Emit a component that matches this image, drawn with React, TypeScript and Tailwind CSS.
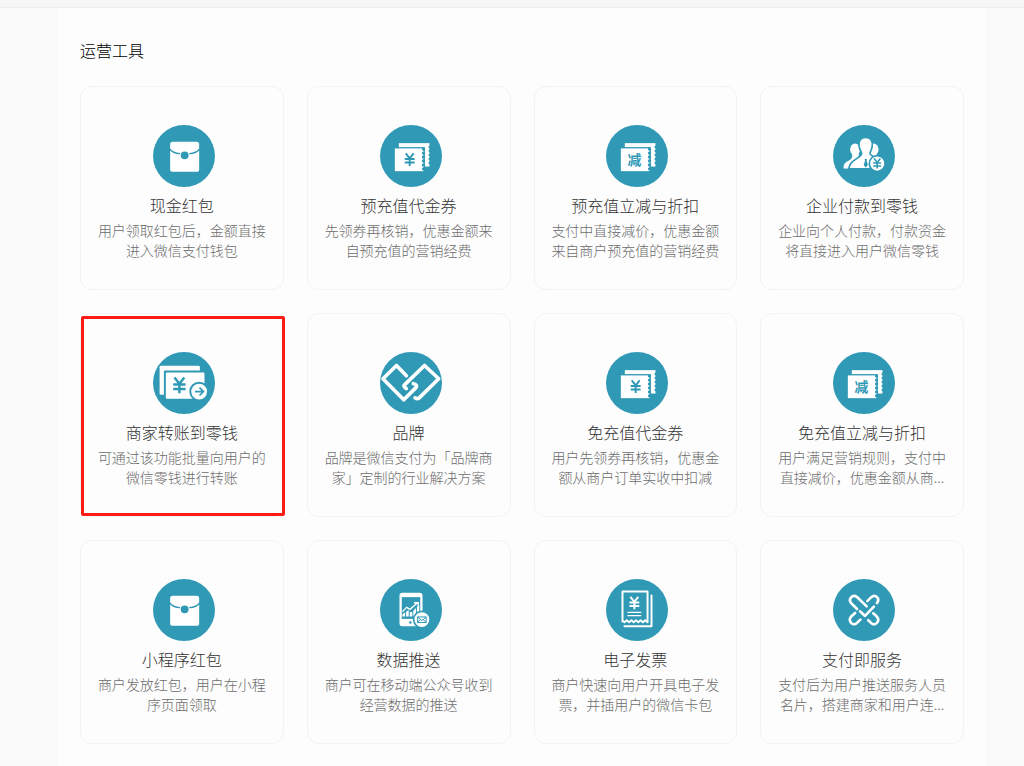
import type { ReactNode } from "react";

const TEAL = "#3099b5";

/** Yuan sign centred on x / y, drawn in the current stroke colour. */
function Yuan({ x, y, scale = 1 }: { x: number; y: number; scale?: number }) {
  return (
    <g
      transform={`translate(${x} ${y}) scale(${scale})`}
      fill="none"
      strokeWidth="6"
    >
      <path d="M-12 -19 L0 -4 L12 -19 M0 -4 V19 M-15 -2 H15 M-15 9 H15" />
    </g>
  );
}

function Envelope() {
  return (
    <>
      <rect x="52" y="51" width="88" height="91" rx="8" fill="#fff" />
      <g fill="none" stroke={TEAL} strokeWidth="4">
        <path d="M50 72 Q60 86 82 87" />
        <path d="M142 72 Q132 86 110 87" />
      </g>
      <circle cx="96" cy="92" r="12" fill={TEAL} />
    </>
  );
}

/** Two stacked coupons with a perforated right edge. */
function Coupon({ children }: { children: ReactNode }) {
  return (
    <>
      <path d="M57 55 H150 V126 H57 Z" fill="#fff" />
      <path d="M41 67 H136 V144 H41 Z" fill={TEAL} />
      <path d="M45 71 H132 V140 H45 Z" fill="#fff" />
      <g fill={TEAL}>
        {[73, 85, 97, 109, 121, 133].map((y) => (
          <circle key={y} cx="132" cy={y} r="5" />
        ))}
        {[67, 79, 91, 103, 115].map((y) => (
          <circle key={y} cx="151" cy={y} r="4" />
        ))}
      </g>
      {children}
    </>
  );
}

function YuanCoupon() {
  return (
    <Coupon>
      <g stroke={TEAL}>
        <Yuan x={90} y={105} />
      </g>
    </Coupon>
  );
}

function DiscountCoupon() {
  return (
    <Coupon>
      <text
        x="86"
        y="120"
        textAnchor="middle"
        fill={TEAL}
        className="font-['Noto_Sans_CJK_SC',sans-serif] text-[42px] font-bold"
      >
        减
      </text>
    </Coupon>
  );
}

function People() {
  return (
    <>
      <g fill="#fff">
        <ellipse cx="67" cy="74" rx="15" ry="18" />
        <path d="M58 84 H78 V132 H32 Q30 116 46 109 Q60 103 58 92 Z" />
        <ellipse cx="123" cy="74" rx="15" ry="18" />
        <path d="M110 84 H132 Q132 98 144 104 V132 H110 Z" />
      </g>
      <path
        d="M99 38 C115 38 121 50 119 64 C118 74 113 80 112 86 C112 98 150 98 152 133 H48 C49 104 86 102 87 86 C86 80 80 74 79 64 C77 50 83 38 99 38 Z"
        fill="#fff"
        stroke={TEAL}
        strokeWidth="5"
      />
      <path d="M96 103 H103 L102 109 L106 121 L99 129 L93 121 L97 109 Z" fill={TEAL} />
      <circle cx="134" cy="117" r="24" fill="#fff" stroke={TEAL} strokeWidth="5" />
      <g stroke={TEAL}>
        <Yuan x={134} y={117} scale={0.8} />
      </g>
    </>
  );
}

function Transfer() {
  return (
    <>
      <rect x="20" y="42" width="122" height="88" rx="4" fill="#fff" />
      <rect x="33" y="56" width="130" height="94" rx="4" fill={TEAL} />
      <rect x="39" y="62" width="117" height="80" rx="3" fill="#fff" />
      <g stroke={TEAL}>
        <Yuan x={80} y={101} scale={1.25} />
      </g>
      <circle cx="140" cy="120" r="27" fill="#fff" stroke={TEAL} strokeWidth="6" />
      <path
        d="M127 120 H152 M141 108 L153 120 L141 132"
        fill="none"
        stroke={TEAL}
        strokeWidth="5"
      />
    </>
  );
}

function Brand() {
  return (
    <g
      fill="none"
      stroke="#fff"
      strokeWidth="11"
      strokeLinecap="round"
      strokeLinejoin="round"
    >
      <path d="M80 72 L50 41 L9 81 L72 145 L109 108 Q113 103 108 99 L101 96" />
      <path d="M106 139 Q113 144 119 139 L178 81 L135 41 L75 99 Q71 103 75 107 L80 111" />
    </g>
  );
}

function DataPush() {
  return (
    <>
      <rect x="59" y="42" width="70" height="101" rx="9" fill="#fff" />
      <rect x="66" y="55" width="56" height="66" fill={TEAL} />
      <circle cx="92" cy="132" r="4" fill={TEAL} />
      <g fill="#fff">
        <path d="M68 107 L76 101 V114 H68 Z M79 99 L87 94 V114 H79 Z M90 101 L98 99 V114 H90 Z M101 96 L109 88 V114 H101 Z M112 85 L119 79 V114 H112 Z" />
      </g>
      <path
        d="M68 99 L81 86 L91 92 L113 73 M103 72 H116 V84"
        fill="none"
        stroke="#fff"
        strokeWidth="4"
      />
      <circle cx="127" cy="123" r="25" fill="#fff" stroke={TEAL} strokeWidth="5" />
      <path
        d="M114 115 H140 V132 H114 Z M114 115 L127 126 L140 115 M114 132 L123 123 M140 132 L131 123"
        fill="none"
        stroke={TEAL}
        strokeWidth="3"
      />
    </>
  );
}

function Invoice() {
  return (
    <g fill="none" stroke="#fff" strokeWidth="6" strokeLinejoin="round">
      <path d="M50 131 V38 H126 V131 L119 125 L112 131 L105 125 L98 131 L91 125 L84 131 L77 125 L70 131 L63 125 L56 131 L50 127" />
      <path d="M138 50 V143 H56" strokeLinecap="round" />
      <path d="M65 101 H107 M65 111 H107" strokeWidth="4" />
      <Yuan x={86} y={73} />
    </g>
  );
}

function Service() {
  return (
    <g
      fill="none"
      stroke="#fff"
      strokeWidth="8"
      strokeLinecap="round"
      strokeLinejoin="round"
    >
      <path d="M73 91 L55 73 C45 61 59 45 72 54 L102 83" />
      <path d="M104 67 L116 55 C129 44 144 60 133 73" />
      <path d="M82 98 L97 112 L124 84" />
      <path d="M67 103 L56 113 C43 126 59 144 72 134 L83 123" />
      <path d="M122 104 L133 114 C144 127 129 144 116 134 L107 125" />
    </g>
  );
}

type Tool = {
  name: string;
  desc: string;
  icon: () => ReactNode;
  marked?: boolean;
};

const tools: Tool[] = [
  { name: "现金红包", desc: "用户领取红包后，金额直接进入微信支付钱包", icon: Envelope },
  { name: "预充值代金券", desc: "先领券再核销，优惠金额来自预充值的营销经费", icon: YuanCoupon },
  { name: "预充值立减与折扣", desc: "支付中直接减价，优惠金额来自商户预充值的营销经费", icon: DiscountCoupon },
  { name: "企业付款到零钱", desc: "企业向个人付款，付款资金将直接进入用户微信零钱", icon: People },
  { name: "商家转账到零钱", desc: "可通过该功能批量向用户的微信零钱进行转账", icon: Transfer, marked: true },
  { name: "品牌", desc: "品牌是微信支付为「品牌商家」定制的行业解决方案", icon: Brand },
  { name: "免充值代金券", desc: "用户先领券再核销，优惠金额从商户订单实收中扣减", icon: YuanCoupon },
  { name: "免充值立减与折扣", desc: "用户满足营销规则，支付中直接减价，优惠金额从商...", icon: DiscountCoupon },
  { name: "小程序红包", desc: "商户发放红包，用户在小程序页面领取", icon: Envelope },
  { name: "数据推送", desc: "商户可在移动端公众号收到经营数据的推送", icon: DataPush },
  { name: "电子发票", desc: "商户快速向用户开具电子发票，并插用户的微信卡包", icon: Invoice },
  { name: "支付即服务", desc: "支付后为用户推送服务人员名片，搭建商家和用户连...", icon: Service },
];

function ToolCard({ name, desc, icon: Icon, marked }: Tool) {
  return (
    <li className="relative flex flex-col items-center rounded-xl border border-[#f3f3f3] px-4 pt-[38px] pb-[29px] text-center">
      <svg viewBox="0 0 188 188" className="ml-1 size-[62px]" aria-hidden="true">
        <circle cx="94" cy="94" r="94" fill={TEAL} />
        <Icon />
      </svg>
      <h3 className="mt-1.5 text-base leading-6 text-[#333]">{name}</h3>
      <p className="mt-[3px] w-[168px] text-sm leading-5 text-[#6c6c6c]">{desc}</p>
      {marked && (
        <span className="pointer-events-none absolute top-0.5 -right-0.5 bottom-0 left-0 rounded-xs border-3 border-[#fb1d15]" />
      )}
    </li>
  );
}

export default function App() {
  return (
    <div className="flex min-h-screen flex-col bg-[#fafafa] font-['Noto_Sans_CJK_SC',sans-serif] font-light">
      <header className="h-2 border-b border-[#ececec] bg-[#f6f6f6]" />
      <main className="mr-[37px] ml-[58px] grow bg-[#fdfdfd] pt-[30px] pr-[23px] pb-6 pl-[22px]">
        <h2 className="text-base leading-6 text-black">运营工具</h2>
        <ul className="mt-6 grid grid-cols-4 gap-[23px]">
          {tools.map((tool) => (
            <ToolCard key={tool.name} {...tool} />
          ))}
        </ul>
      </main>
    </div>
  );
}
